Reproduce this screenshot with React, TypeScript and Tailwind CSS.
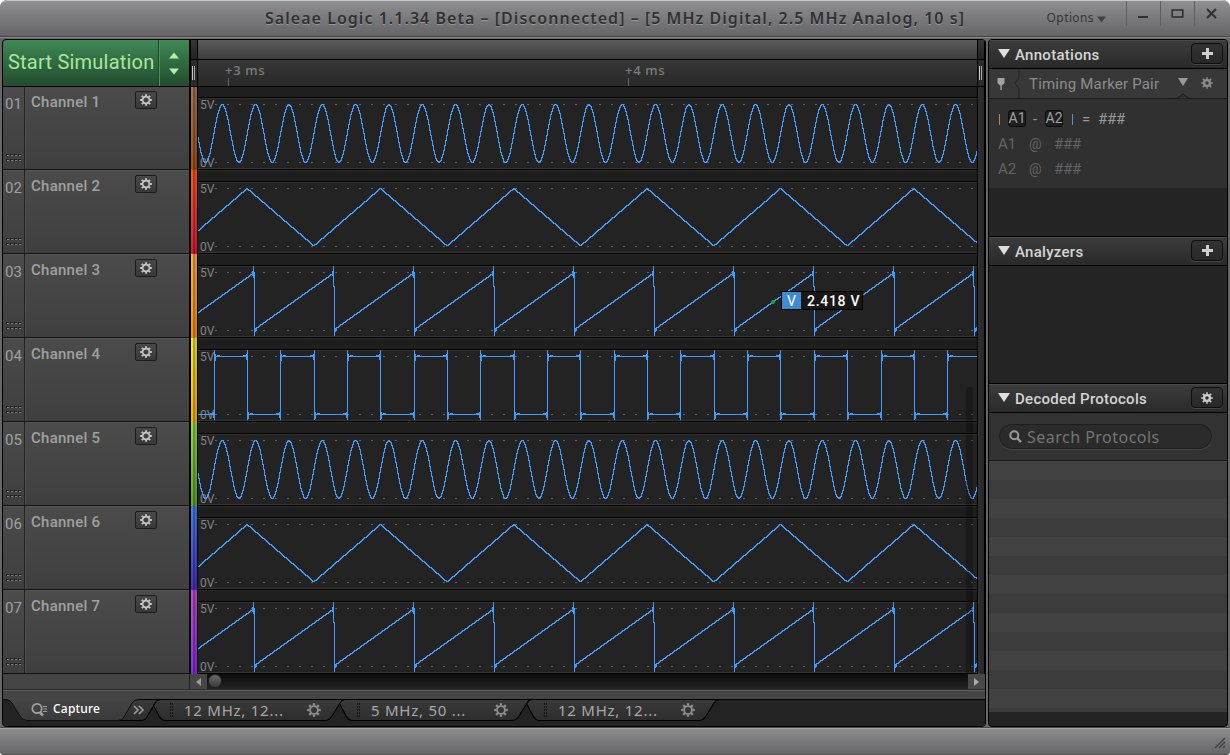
import type { ReactNode } from "react";

type Wave = "sine" | "triangle" | "saw" | "square";

type Channel = {
  id: string;
  name: string;
  wave: Wave;
  strip: string;
};

const PLOT_W = 779;
const ROW_H = 84;
const PLOT_X = 198;

const channels: Channel[] = [
  { id: "01", name: "Channel 1", wave: "sine", strip: "from-[#a4765a] to-[#a55408]" },
  { id: "02", name: "Channel 2", wave: "triangle", strip: "from-[#ff5a14] to-[#dc1440]" },
  { id: "03", name: "Channel 3", wave: "saw", strip: "from-[#f9b240] to-[#fb9300]" },
  { id: "04", name: "Channel 4", wave: "square", strip: "from-[#f6ee32] to-[#fbb400]" },
  { id: "05", name: "Channel 5", wave: "sine", strip: "from-[#98dc44] to-[#5fa82c]" },
  { id: "06", name: "Channel 6", wave: "triangle", strip: "from-[#4284e6] to-[#4a2cc4]" },
  { id: "07", name: "Channel 7", wave: "saw", strip: "from-[#c04cd0] to-[#8c2ce0]" },
];

const captureTabs = ["12 MHz, 12...", "5 MHz, 50 ...", "12 MHz, 12..."];

/** Pixel-stepped trace of fn between two plot columns. */
function steps(from: number, to: number, fn: (x: number) => number) {
  let d = "";
  for (let x = from; x <= to; x += 1) {
    const y = Math.floor(fn(x)) + 0.5;
    d += d ? `V${y}H${x + 0.5}` : `M${x - 0.5} ${y}H${x + 0.5}`;
  }
  return d;
}

function sinePath() {
  return steps(0, PLOT_W, (x) => {
    const phase = ((x + PLOT_X - 222.3) / 33.333) * Math.PI * 2;
    return 47.5 - 28.9 * Math.cos(phase);
  });
}

function trianglePath() {
  return steps(0, PLOT_W, (x) => {
    const phase = (((x + PLOT_X - 247.2) / 133.333) % 1 + 1) % 1;
    return 18.5 + 57.4 * (1 - Math.abs(1 - phase * 2));
  });
}

function sawPath() {
  let d = "";
  for (let i = 0; i < 11; i += 1) {
    const x = 56.5 + i * 80;
    const start = x - 80;
    d += steps(Math.max(0, Math.floor(start)), Math.floor(x) - 1, (px) => 75.6 - (px - start) * 0.715);
    d += `M${x - 2} 17V22M${x - 1} 12V24`;
    d += i % 2 === 1 ? `V32.5H${x}V82` : `M${x - 1} 18.5H${x}V82`;
    d += `M${x + 1} 74V78M${x + 2} 74V77`;
  }
  return d;
}

function squarePath() {
  let d = "M0 76.5H16.5";
  for (let i = 0; i < 24; i += 1) {
    const x = Math.floor(214.2 - PLOT_X + i * 33.34) + 0.5;
    const next = Math.floor(214.2 - PLOT_X + (i + 1) * 33.34) + 0.5;
    const level = i % 2 === 0 ? 18.5 : 76.5;
    const other = i % 2 === 0 ? 76.5 : 18.5;
    d += `M${x} 12V82`;
    d += `M${x + 1} ${level - 3}V${level + 4}M${x - 1} ${other - 3}V${other + 3}`;
    d += `M${x + 2} ${level - 1}H${x + 5}M${x - 5} ${other - 1}H${x - 1}`;
    d += `M${x} ${level}H${next}`;
  }
  return d;
}

const wavePaths: Record<Wave, string> = {
  sine: sinePath(),
  triangle: trianglePath(),
  saw: sawPath(),
  square: squarePath(),
};

function Gear({ size, solid = false, className }: { size: number; solid?: boolean; className?: string }) {
  return (
    <svg width={size} height={size} viewBox="-8 -8 16 16" className={className} fill="none" stroke="currentColor">
      <circle r={solid ? 3.9 : 4.5} strokeWidth={solid ? 3 : 2.1} />
      {Array.from({ length: 8 }, (_, i) => (
        <path key={i} d="M0 -5V-7.8" strokeWidth={solid ? 2 : 2.6} transform={`rotate(${i * 45})`} />
      ))}
    </svg>
  );
}

function TitleBar() {
  const cell = "flex h-[25px] w-[34px] items-center justify-center border-l border-[#5e5e60]";
  return (
    <header className="relative flex h-[38px] shrink-0 justify-end rounded-t-[7px] border-t border-[#c4c8c4] border-b border-b-[#88888a] bg-linear-to-b from-[#8f8f91] to-[#646466] pr-[2px] shadow-[inset_0_-1px_0_#454547]">
      <h1 className="absolute inset-x-0 top-[5px] text-center font-['Noto_Sans'] text-[16px] leading-6 font-semibold tracking-[1.03px] whitespace-pre text-[#303032] [text-shadow:0_1px_0_#98989a]">
        Saleae Logic 1.1.34 Beta – [Disconnected] – [5 MHz Digital, 2.5 MHz Analog, 10 s]
      </h1>
      <button className="mr-[20px] flex h-[33px] items-center gap-[3px] font-['Noto_Sans'] text-[12px] tracking-[0.4px] text-[#353537]">
        Options
        <svg width="9" height="7" className="mt-[3px]">
          <path d="M0 0.5H9L4.5 6.5Z" fill="#414143" />
        </svg>
      </button>
      <div className="flex">
        <button className={cell} aria-label="Minimize">
          <svg width="12" height="12" className="mr-px">
            <path d="M1 9H11" stroke="#303032" strokeWidth="2" />
          </svg>
        </button>
        <button className={cell} aria-label="Maximize">
          <svg width="13" height="10" className="mt-px mr-px">
            <rect x="1.2" y="1" width="10.6" height="7" fill="none" stroke="#303032" strokeWidth="1.6" />
          </svg>
        </button>
        <button className={cell} aria-label="Close">
          <svg width="11" height="11">
            <path d="M1 1L10 10M10 1L1 10" stroke="#303032" strokeWidth="2" />
          </svg>
        </button>
      </div>
    </header>
  );
}

function Splitter() {
  return (
    <div className="flex h-full w-[8px] flex-col border-x border-black bg-[#262626]">
      <div className="h-[20px] border-b border-black bg-linear-to-b from-[#363636] to-[#222]" />
      <div className="flex flex-1 gap-px bg-[#2b2b2b] pt-[6px] pl-px">
        <span className="h-[14px] w-px bg-[#c4c4c4]" />
        <span className="h-[14px] w-px bg-[#a4a4a4]" />
      </div>
    </div>
  );
}

function TimeMark({ label, left }: { label: string; left: number }) {
  return (
    <div className="absolute top-0 h-full" style={{ left }}>
      <span className="absolute top-[1px] -left-[3px] font-['Noto_Sans'] text-[13px] leading-[18px] font-medium tracking-[0.7px] whitespace-nowrap text-[#7c7c7c]">
        {label}
      </span>
      <span className="absolute bottom-0 left-0 h-[8px] w-px bg-[#666]" />
    </div>
  );
}

function Header() {
  return (
    <div className="flex h-[46px] shrink-0">
      <div className="flex w-[186px] rounded-tl bg-linear-to-b from-[#418957] via-[#2f6a40] to-[#234c2f]">
        <button className="w-[156px] border-r border-[#1d4528] pb-[2px] pl-[5px] text-left font-['Roboto'] text-[20px] tracking-[0.22px] whitespace-nowrap text-[#abe5a0]">
          Start Simulation
        </button>
        <div className="flex flex-1 flex-col items-center justify-center gap-[9px] border-l border-[#4b9560] pr-px">
          <svg width="10" height="7">
            <path d="M0 6.5H10L5 0.5Z" fill="#b6ecae" />
          </svg>
          <svg width="10" height="7">
            <path d="M0 0.5H10L5 6.5Z" fill="#b6ecae" />
          </svg>
        </div>
      </div>
      <div className="w-px bg-black" />
      <Splitter />
      <div className="flex w-[779px] flex-col">
        <div className="h-[20px] border-b border-black bg-linear-to-b from-[#5c5c5c] to-[#3c3c3c]" />
        <div className="relative flex-1 bg-linear-to-b from-[#373737] to-[#292929]">
          <TimeMark label="+3 ms" left={30} />
          <TimeMark label="+4 ms" left={430} />
        </div>
      </div>
      <Splitter />
    </div>
  );
}

function Grip() {
  return (
    <svg width="16" height="8" className="absolute bottom-[7px] left-[3px]" shapeRendering="crispEdges">
      {[0, 5].map((y) =>
        [0, 4, 8, 12].map((x) => (
          <g key={`${x}-${y}`}>
            <rect x={x} y={y} width="3" height="2" fill="#202020" />
            <rect x={x + 1} y={y + 1} width="2" height="1" fill="#858585" />
          </g>
        )),
      )}
    </svg>
  );
}

function ChannelRow({ channel, children }: { channel: Channel; children?: ReactNode }) {
  return (
    <div className="relative flex h-[84px] shrink-0">
      <div className="flex w-[186px] border-b border-[#111] bg-linear-to-b from-[#4b4b4b] to-[#3f3f3f] font-['Roboto'] text-[#a0a0a0] shadow-[inset_0_1px_0_#565656]">
        <div className="relative w-[22px] border-r border-[#222] pt-[8px] pl-[2px] text-[15px] leading-5 tracking-[0.1px]">
          {channel.id}
          <Grip />
        </div>
        <span className="w-[110px] border-l border-[#505050] pt-[6px] pl-[5px] text-[15px] leading-5 font-medium tracking-[0.25px]">
          {channel.name}
        </span>
        <button
          className="mt-[5px] flex h-[18px] w-[22px] items-center justify-center rounded-[2px] border border-[#1c1c1c] bg-linear-to-b from-[#484848] to-[#383838] text-[#c6c6c6]"
          aria-label={`${channel.name} settings`}
        >
          <Gear size={12} />
        </button>
      </div>
      <div className="w-px bg-black" />
      <div className="w-[8px] border-x border-black">
        <div className={`flex h-full bg-linear-to-b ${channel.strip}`}>
          <span className="ml-[2px] w-[2px] bg-black/30" />
          <span className="flex-1 bg-black/15" />
        </div>
      </div>
      <div className="flex w-[779px] flex-col">
        <div className="h-[12px] border-b border-black bg-[#1e1e1e] shadow-[inset_0_1px_0_#2b2b2b]" />
        <div className="flex-1 border-t border-b border-t-[#303030] border-b-black bg-[#232323] shadow-[inset_0_-1px_0_#363636]" />
      </div>
      <div className="w-[8px] border-x border-black bg-linear-to-r from-[#303030] to-[#272727]" />
      <div className="absolute top-0 left-[195px] h-[84px] w-[779px] overflow-hidden font-['Roboto'] text-[12px] leading-[14px] text-[#848484]">
        <span className="absolute top-[12px] left-[2px]">5V</span>
        <span className="absolute top-[70px] left-[2px]">0V</span>
        <svg width={PLOT_W} height={ROW_H} className="absolute inset-0" shapeRendering="crispEdges" fill="none">
          <path d="M17 18.5H779M17 76.5H779" stroke="#626262" strokeDasharray="2 10" />
          <path d={wavePaths[channel.wave]} stroke="#409cff" />
        </svg>
        {children}
      </div>
    </div>
  );
}

function VoltageTip() {
  return (
    <>
      <span className="absolute top-[46px] left-[573px] size-[4px] rounded-full bg-[#16a050]" />
      <div className="absolute top-[37px] left-[583px] flex h-[19px] w-[82px] border border-black bg-[#171717] text-[14px] leading-[18px] text-white">
        <span className="w-[19px] bg-[#3d8bd2] text-center">V</span>
        <span className="pl-[6px] font-medium tracking-[0.7px] whitespace-nowrap">2.418 V</span>
      </div>
    </>
  );
}

function HorizontalScroll() {
  return (
    <div className="flex h-[16px] shrink-0 border-b border-[#2c2c2c]">
      <div className="w-[187px] border-r border-[#222] bg-[#454545]" />
      <button className="flex w-[17px] items-center justify-center bg-[#464646]" aria-label="Scroll left">
        <svg width="5" height="8">
          <path d="M5 0V8L0 4Z" fill="#999" />
        </svg>
      </button>
      <div className="flex-1 bg-linear-to-b from-[#0c0c0c] to-[#232323]">
        <div className="ml-[1px] size-[14px] rounded-full border border-[#222] bg-linear-to-b from-[#696969] to-[#3c3c3c]" />
      </div>
      <button className="flex w-[17px] items-center justify-center bg-[#484848]" aria-label="Scroll right">
        <svg width="5" height="8">
          <path d="M0 0V8L5 4Z" fill="#aaa" />
        </svg>
      </button>
    </div>
  );
}

function CaptureTab({ label, order }: { label: string; order: number }) {
  return (
    <div className="relative -mr-[9px] flex h-[22px] w-[196px] items-center text-[#a8a8a8]" style={{ zIndex: 5 - order }}>
      <svg width="196" height="22" className="absolute inset-0">
        <defs>
          <linearGradient id="tab" x1="0" y1="0" x2="0" y2="1">
            <stop offset="0" stopColor="#3a3a3a" />
            <stop offset="1" stopColor="#2d2d2d" />
          </linearGradient>
        </defs>
        <path
          d="M0 0.5L4 5.5L9 15Q12 21.5 16 21.5H176Q180 21.5 183 17L191 4Q193 0.5 196 0.5Z"
          fill="url(#tab)"
          stroke="#000"
          strokeWidth="1.2"
        />
      </svg>
      <svg width="4" height="15" className="absolute top-[4px] left-[21px]" shapeRendering="crispEdges">
        <path d="M0.5 0V15M2.5 0V15" stroke="#151515" strokeDasharray="2 1" />
      </svg>
      <span className="absolute top-0 left-[35px] font-['Noto_Sans'] text-[15px] leading-[22px] tracking-[0.75px] whitespace-nowrap">
        {label}
      </span>
      <Gear size={14} className="absolute top-[4px] left-[158px] text-[#8c8c8c]" />
    </div>
  );
}

function TabBar() {
  return (
    <div className="flex flex-1 flex-col">
      <div className="h-[9px] border-t border-[#5c5c5c] bg-[#454545]" />
      <div className="flex flex-1 rounded-b bg-[#232323] shadow-[inset_0_1px_0_#000]">
        <div className="relative z-10 h-[22px] w-[146px]">
          <svg width="160" height="22" className="absolute inset-0">
            <defs>
              <linearGradient id="capture" x1="0" y1="0" x2="0" y2="1">
                <stop offset="0" stopColor="#454545" />
                <stop offset="1" stopColor="#3a3a3a" />
              </linearGradient>
            </defs>
            <path
              d="M113 21.5H138Q142 21.5 144 18L152 4Q154 0.5 158 0.5H128Z"
              fill="url(#tab)"
              stroke="#000"
              strokeWidth="1.2"
            />
            <path d="M2 0H136Q131 0.5 129 4L121 18Q119 21.5 115 21.5H24Q20 21.5 17 17L9 4Q7 0.5 2 0Z" fill="url(#capture)" />
            <path d="M0 0.5H2Q7 0.5 9 4L17 17Q20 21.5 24 21.5H115Q119 21.5 121 18L129 4Q131 0.5 136 0.5" fill="none" stroke="#101010" />
            <path d="M131 7L135 11L131 15M136 7L140 11L136 15" fill="none" stroke="#999" strokeWidth="1.7" />
          </svg>
          <div className="absolute top-0 left-[28px] flex h-[20px] items-center gap-[5px] font-['Noto_Sans'] text-[12px] font-medium tracking-[0.2px] text-white">
            <svg width="17" height="15" fill="none" stroke="#a0a0a0">
              <circle cx="6" cy="6.5" r="4.7" strokeWidth="1.7" />
              <path d="M8.5 10L12 13.5" strokeWidth="2.5" />
              <path d="M12 4.5H16M12.5 7H16M12 9.5H16" />
            </svg>
            Capture
          </div>
        </div>
        {captureTabs.map((label, i) => (
          <CaptureTab key={i} label={label} order={i} />
        ))}
      </div>
    </div>
  );
}

function SectionHeader({ title, children }: { title: string; children: ReactNode }) {
  return (
    <div className="flex h-[29px] shrink-0 items-center border-b border-black bg-linear-to-b from-[#3c3c3c] to-[#2a2a2a] pr-[4px] pl-[9px] shadow-[inset_0_1px_0_#4a4a4a]">
      <svg width="12" height="9" className="mb-[1px]">
        <path d="M0 0H12L6 9Z" fill="#dedede" />
      </svg>
      <h2 className="mt-[2px] ml-[5px] flex-1 font-['Roboto'] text-[15px] font-medium tracking-[0.28px] text-[#d4d4d4]">{title}</h2>
      <button
        aria-label={`${title} options`}
        className="mb-[1px] flex h-[21px] w-[32px] items-center justify-center rounded-[4px] border border-[#0e0e0e] bg-linear-to-b from-[#333] to-[#282828] text-[#cfcfcf] shadow-[0_1px_0_#444]"
      >
        {children}
      </button>
    </div>
  );
}

function Plus() {
  return (
    <svg width="11" height="11" shapeRendering="crispEdges">
      <path d="M0 5.5H11M5.5 0V11" stroke="currentColor" strokeWidth="3" />
    </svg>
  );
}

function MarkerKey({ children }: { children: ReactNode }) {
  return (
    <span className="flex h-[17px] w-[18px] items-center justify-center rounded-[3px] border border-[#0c0c0c] bg-[#1f1f1f] text-[14px] text-[#a0a0a0]">
      {children}
    </span>
  );
}

function TimingMarkers() {
  return (
    <div className="shrink-0 font-['Roboto']">
      <div className="relative flex h-[30px] items-center border-b border-[#1a1a1a] bg-[#383838] text-[#8d8d8d]">
        <svg width="8" height="12" className="ml-[8px]">
          <path d="M0.5 0H7.5V5L5 7.5H3L0.5 5ZM3.3 7H4.7V12H3.3Z" fill="#a2a2a2" />
        </svg>
        <svg width="6" height="29" className="ml-[9px]">
          <path d="M5 0V9L1 14.5L5 20V29" fill="none" stroke="#242424" />
        </svg>
        <span className="mt-[2px] ml-[9px] text-[15px] tracking-[0.2px] whitespace-nowrap">Timing Marker Pair</span>
        <svg width="10" height="8" className="absolute top-[9px] left-[189px]">
          <path d="M0 0H10L5 8Z" fill="#999" />
        </svg>
        <Gear size={12} solid className="absolute top-[8px] left-[212px]" />
        <svg width="16" height="6" className="absolute -bottom-[1px] left-[186px]">
          <path d="M0 5.5L3 5L8 1L13 5L16 5.5" fill="#303030" stroke="#1a1a1a" />
        </svg>
      </div>
      <div className="h-[89px] bg-[#303030] pl-[9px] text-[15px] text-[#646464]">
        <div className="flex h-[39px] items-center pt-px text-[#9a9a9a]">
          <span className="ml-[1px] h-[11px] w-px bg-[#b48350]" />
          <span className="mb-[2px] ml-[8px]">
            <MarkerKey>A1</MarkerKey>
          </span>
          <span className="mx-[7px] w-[5px]">-</span>
          <span className="mb-[2px]">
            <MarkerKey>A2</MarkerKey>
          </span>
          <span className="ml-[9px] h-[11px] w-px bg-[#6290b4]" />
          <span className="ml-[9px] w-[16px]">=</span>
          <span className="tracking-[-0.2px]">###</span>
        </div>
        {["A1", "A2"].map((name) => (
          <div key={name} className="flex h-[25px] items-center pb-[12px]">
            <span className="w-[31px]">{name}</span>
            <span className="w-[25px] text-[14px]">@</span>
            <span className="tracking-[-0.2px]">###</span>
          </div>
        ))}
      </div>
    </div>
  );
}

function SidePanel() {
  return (
    <aside className="flex w-[240px] flex-col overflow-hidden rounded-[4px] border border-black bg-[#242424]">
      <SectionHeader title="Annotations">
        <Plus />
      </SectionHeader>
      <TimingMarkers />
      <div className="h-[49px] shrink-0 border-b border-black" />
      <SectionHeader title="Analyzers">
        <Plus />
      </SectionHeader>
      <div className="h-[118px] shrink-0 border-b border-black" />
      <SectionHeader title="Decoded Protocols">
        <Gear size={12} solid />
      </SectionHeader>
      <div className="h-[48px] shrink-0 border-b border-[#1c1c1c] bg-[#323232] px-[10px] pt-[11px]">
        <div className="flex h-[25px] w-[213px] items-center rounded-full border border-[#1e1e1e] bg-[#2b2b2b] pl-[9px] text-[#757575] shadow-[0_1px_0_#444]">
          <svg width="13" height="13" fill="none" stroke="#9a9a9a">
            <circle cx="5.3" cy="5.3" r="4" strokeWidth="2" />
            <path d="M8 8L12 12" strokeWidth="2.4" />
          </svg>
          <span className="ml-[5px] font-['Noto_Sans'] text-[16px] tracking-[0.48px] whitespace-nowrap">Search Protocols</span>
        </div>
      </div>
      <div className="h-[251px] shrink-0 bg-[repeating-linear-gradient(to_bottom,#414141_0px,#414141_19px,#3c3c3c_19px,#3c3c3c_38px)]" />
    </aside>
  );
}

export default function App() {
  return (
    <div className="h-[755px] w-[1230px] overflow-hidden bg-white">
      <div className="flex h-full flex-col overflow-hidden rounded-t-[7px] rounded-b-[4px] bg-[#676767]">
        <TitleBar />
        <div className="flex h-[690px] shrink-0 gap-[2px] border-b border-[#4a4a4a] pt-px pl-[2px]">
          <main className="relative flex h-[688px] w-[984px] flex-col overflow-hidden rounded-[4px] border border-black bg-[#444]">
            <Header />
            {channels.map((channel) => (
              <ChannelRow key={channel.id} channel={channel}>
                {channel.id === "03" && <VoltageTip />}
              </ChannelRow>
            ))}
            <div className="absolute top-[46px] h-px w-full bg-black" />
            <div className="absolute top-[347px] left-[963px] h-[286px] w-[7px] rounded-t bg-black/25" />
            <HorizontalScroll />
            <TabBar />
          </main>
          <SidePanel />
        </div>
        <footer className="relative flex-1 border-t border-b border-t-[#a2a2a4] border-b-[#555] bg-linear-to-b from-[#8c8c8f] to-[#676768]">
          <svg width="12" height="12" className="absolute right-[4px] bottom-[5px]" stroke="#3e3e40">
            <path d="M1 11L11 1M5 11L11 5M9 11L11 9" strokeWidth="1.4" />
          </svg>
        </footer>
      </div>
    </div>
  );
}
